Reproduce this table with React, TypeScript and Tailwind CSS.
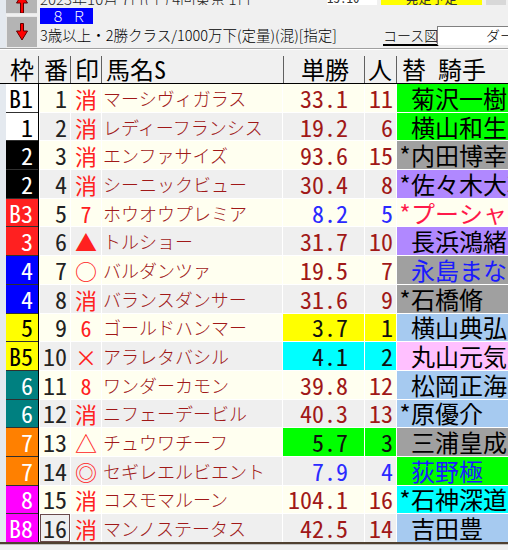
import React from "react";

type Row = {
  f: string;
  fc: string;
  ft: string;
  n: string;
  m: string;
  name: string;
  odds: string;
  pop: string;
  oc: string;
  obg: string;
  jp: string;
  j: string;
  jbg: string;
  jc: string;
};

const GREEN = "bg-[#00ff00]";
const GRAY = "bg-[#a0a0a0]";
const PURPLE = "bg-[#b088ff]";
const LBLUE = "bg-[#a6caf0]";
const PINK = "bg-[#ffc0ff]";
const CYAN = "bg-[#00ffff]";
const NONE = "";
const RED = "text-[#a01818]";
const BLUE = "text-[#2a2aff]";
const BLACK = "text-[#101010]";

const F1 = "bg-white";
const F2 = "bg-black";
const F3 = "bg-[#ff2020]";
const F4 = "bg-[#0000ff]";
const F5 = "bg-[#ffff00]";
const F6 = "bg-[#008080]";
const F7 = "bg-[#ff8000]";
const F8 = "bg-[#ff00ff]";
const TW = "text-white";
const TB = "text-black";

const rows: Row[] = [
  { f: "B1", fc: F1, ft: TB, n: "1", m: "消", name: "マーシヴィガラス", odds: "33.1", pop: "11", oc: RED, obg: NONE, jp: " ", j: "菊沢一樹", jbg: GREEN, jc: "text-black" },
  { f: "1", fc: F1, ft: TB, n: "2", m: "消", name: "レディーフランシス", odds: "19.2", pop: "6", oc: RED, obg: NONE, jp: " ", j: "横山和生", jbg: GREEN, jc: "text-black" },
  { f: "2", fc: F2, ft: TW, n: "3", m: "消", name: "エンファサイズ", odds: "93.6", pop: "15", oc: RED, obg: NONE, jp: "*", j: "内田博幸", jbg: GRAY, jc: "text-black" },
  { f: "2", fc: F2, ft: TW, n: "4", m: "消", name: "シーニックビュー", odds: "30.4", pop: "8", oc: RED, obg: NONE, jp: "*", j: "佐々木大輔", jbg: PURPLE, jc: "text-black" },
  { f: "B3", fc: F3, ft: TW, n: "5", m: "7", name: "ホウオウプレミア", odds: "8.2", pop: "5", oc: BLUE, obg: NONE, jp: "*", j: "プーシャン", jbg: NONE, jc: "text-[#ff1a4a]" },
  { f: "3", fc: F3, ft: TW, n: "6", m: "▲", name: "トルショー", odds: "31.7", pop: "10", oc: RED, obg: NONE, jp: " ", j: "長浜鴻緒", jbg: PURPLE, jc: "text-black" },
  { f: "4", fc: F4, ft: TW, n: "7", m: "○", name: "バルダンツァ", odds: "19.5", pop: "7", oc: RED, obg: NONE, jp: " ", j: "永島まなみ", jbg: GRAY, jc: "text-[#1a1aff]" },
  { f: "4", fc: F4, ft: TW, n: "8", m: "消", name: "バランスダンサー", odds: "31.6", pop: "9", oc: RED, obg: NONE, jp: "*", j: "石橋脩", jbg: GRAY, jc: "text-black" },
  { f: "5", fc: F5, ft: TB, n: "9", m: "6", name: "ゴールドハンマー", odds: "3.7", pop: "1", oc: BLACK, obg: "bg-[#ffff00]", jp: " ", j: "横山典弘", jbg: LBLUE, jc: "text-black" },
  { f: "B5", fc: F5, ft: TB, n: "10", m: "×", name: "アラレタバシル", odds: "4.1", pop: "2", oc: BLACK, obg: "bg-[#00ffff]", jp: " ", j: "丸山元気", jbg: PINK, jc: "text-black" },
  { f: "6", fc: F6, ft: TW, n: "11", m: "8", name: "ワンダーカモン", odds: "39.8", pop: "12", oc: RED, obg: NONE, jp: " ", j: "松岡正海", jbg: LBLUE, jc: "text-black" },
  { f: "6", fc: F6, ft: TW, n: "12", m: "消", name: "ニフェーデービル", odds: "40.3", pop: "13", oc: RED, obg: NONE, jp: "*", j: "原優介", jbg: LBLUE, jc: "text-black" },
  { f: "7", fc: F7, ft: TW, n: "13", m: "△", name: "チュウワチーフ", odds: "5.7", pop: "3", oc: BLACK, obg: "bg-[#00ff00]", jp: " ", j: "三浦皇成", jbg: GRAY, jc: "text-black" },
  { f: "7", fc: F7, ft: TW, n: "14", m: "◎", name: "セギレエルビエント", odds: "7.9", pop: "4", oc: BLUE, obg: NONE, jp: " ", j: "荻野極", jbg: GREEN, jc: "text-[#1a1aff]" },
  { f: "8", fc: F8, ft: TW, n: "15", m: "消", name: "コスモマルーン", odds: "104.1", pop: "16", oc: RED, obg: NONE, jp: "*", j: "石神深道", jbg: CYAN, jc: "text-black" },
  { f: "B8", fc: F8, ft: TW, n: "16", m: "消", name: "マンノステータス", odds: "42.5", pop: "14", oc: RED, obg: NONE, jp: " ", j: "吉田豊", jbg: LBLUE, jc: "text-black" },
];

function UpArrow() {
  return (
    <svg width="14" height="14" viewBox="0 0 14 14">
      <path d="M5.5 13 H8.5 V3 H12.5 L7 -6 L1.5 3 H5.5 Z" fill="#ff0000" stroke="#600000" strokeWidth="1" />
    </svg>
  );
}

function DownArrow() {
  return (
    <svg width="14" height="18" viewBox="0 0 14 18">
      <path d="M5.5 0.5 H8.5 V8 H12.5 L7 17 L1.5 8 H5.5 Z" fill="#ff0000" stroke="#600000" strokeWidth="1" />
    </svg>
  );
}

export default function App() {
  return (
    <div className="w-[508px] h-[550px] overflow-hidden bg-[#f0f0f0] [font-family:'Noto_Sans_Mono_CJK_JP','Noto_Sans_CJK_JP',sans-serif] font-light text-black">
      {/* top panel */}
      <div className="flex h-[48px]">
        <div className="w-[6px] shrink-0 bg-[#e4e9ef]" />
        <div className="w-[31px] shrink-0 flex flex-col gap-[2px]">
          <div className="h-[14px] bg-[#b4b4b4] border-b border-[#e8e8e8] flex justify-center items-start overflow-hidden">
            <UpArrow />
          </div>
          <div className="h-[31px] bg-[#b4b4b4] border-t border-l border-[#e8e8e8] flex justify-center items-center">
            <DownArrow />
          </div>
        </div>
        <div className="flex-1 min-w-0 flex flex-col pl-[3px]">
          <div className="h-[5px] overflow-hidden flex items-end">
            <div className="flex items-end gap-[4px] -mb-[1px] shrink-0">
              <span className="w-[283px] shrink-0 text-[15px] leading-[15px] text-[#222] whitespace-nowrap overflow-hidden [font-family:'Noto_Sans_CJK_JP',sans-serif]">2023年10月 7日(土) 4回東京 1日</span>
              <span className="w-[50px] shrink-0 h-[16px] bg-white text-[13px] leading-[15px] text-[#333]">15:10</span>
              <span className="w-[101px] shrink-0 h-[16px] bg-[#ffff00] text-[13px] leading-[15px] text-center text-[#333]">発走予定</span>
              <span className="w-[20px] shrink-0 h-[16px] bg-[#d8d8d8]" />
            </div>
          </div>
          <div className="h-[3px]" />
          <div className="w-[53px] h-[16px] bg-[#0000ff] text-white text-[14px] leading-[16px] pl-[11px] tracking-[7px] [font-family:'Noto_Sans_CJK_JP',sans-serif]">８Ｒ</div>
          <div className="h-[2px]" />
          <div className="flex items-center h-[18px]">
            <span className="w-[343px] shrink-0 text-[14.5px] leading-[18px] whitespace-nowrap [font-family:'Noto_Sans_CJK_JP',sans-serif]">3歳以上・2勝クラス/1000万下(定量)(混)[指定]</span>
            <span className="w-[50px] shrink-0 text-[14px] leading-[16px] underline underline-offset-[3px] decoration-[2px] whitespace-nowrap [font-family:'Noto_Sans_CJK_JP',sans-serif]">コース図</span>
            <div className="ml-[4px] flex-1 min-w-0 h-[19px] bg-white border-t border-l border-[#808080] text-[14px] leading-[17px] text-right overflow-hidden whitespace-nowrap [font-family:'Noto_Sans_CJK_JP',sans-serif]">
              <span className="-mr-[6px]">ダー</span>
            </div>
          </div>
        </div>
      </div>
      {/* separator */}
      <div className="h-[2px] border-t border-[#a0a0a0] bg-white" />
      {/* header */}
      <div className="flex h-[33px] items-end">
        <div className="w-[6px] shrink-0" />
        <div className="w-[33px] shrink-0 h-[27px] text-[24px] leading-[26px] pl-[4px] border-r border-[#606060]">枠</div>
        <div className="w-[32px] shrink-0 h-[27px] text-[24px] leading-[26px] pl-[5px] border-r border-[#606060]">番</div>
        <div className="w-[31px] shrink-0 h-[27px] text-[24px] leading-[26px] pl-[4px] border-r border-[#606060]">印</div>
        <div className="w-[182px] shrink-0 h-[27px] text-[24px] leading-[26px] pl-[4px] border-r border-[#606060]">馬名S</div>
        <div className="w-[81px] shrink-0 h-[27px] text-[24px] leading-[26px] pl-[17px] border-r border-[#606060]">単勝</div>
        <div className="w-[32px] shrink-0 h-[27px] text-[24px] leading-[26px] pl-[3px] border-r border-[#606060]">人</div>
        <div className="flex-1 min-w-0 h-[27px] text-[24px] leading-[26px] pl-[5px] whitespace-pre">替 騎手</div>
      </div>
      <div className="h-px bg-black" />
      {/* body */}
      <div className="flex h-[458px]">
        <div className="w-[6px] shrink-0 bg-[#e4e9ef]" />
        <div className="w-[32px] shrink-0 flex flex-col gap-px bg-[#303030]">
          {rows.map((r, i) => (
            <div
              key={i}
              className={`flex-1 min-h-0 flex items-center justify-end pr-[5px] text-[24px] leading-none ${r.fc} ${r.ft}`}
            >
              {r.f}
            </div>
          ))}
        </div>
        <div className="w-px shrink-0 bg-black" />
        <div className="flex-1 min-w-0 flex flex-col gap-px bg-white pl-px">
          {rows.map((r, i) => {
            const bg = i % 2 === 0 ? "bg-[#fffff0]" : "bg-[#efefef]";
            return (
              <div key={i} className="flex-1 flex gap-px min-h-0">
                <div
                  className={`w-[30px] shrink-0 flex items-center justify-end pr-[3px] text-[24px] leading-none text-[#222] ${bg} ${
                    i === 15 ? "outline outline-1 -outline-offset-1 outline-[#6a4a4a]" : ""
                  }`}
                >
                  {r.n}
                </div>
                <div className={`w-[30px] shrink-0 flex items-center justify-center text-[22px] leading-none text-[#ff2020] ${bg}`}>
                  {r.m}
                </div>
                <div className={`w-[180px] shrink-0 flex items-center pl-px text-[18px] leading-none whitespace-nowrap overflow-hidden ${RED} ${bg} [font-family:'Noto_Sans_CJK_JP',sans-serif]`}>
                  {r.name}
                </div>
                <div className={`w-[81px] shrink-0 flex items-center justify-end pr-[16px] text-[24px] leading-none ${r.oc} ${r.obg || bg}`}>
                  {r.odds}
                </div>
                <div className={`w-[31px] shrink-0 flex items-center justify-end pr-[3px] text-[24px] leading-none ${r.oc} ${r.obg || bg}`}>
                  {r.pop}
                </div>
                <div className={`flex-1 min-w-0 flex items-center text-[24px] leading-none whitespace-pre overflow-hidden pl-[2px] ${r.jc} ${r.jbg || bg}`}>
                  <span className="w-[12px] shrink-0 inline-block">{r.jp}</span>
                  {r.j}
                </div>
              </div>
            );
          })}
        </div>
      </div>
      <div className="h-[2px] bg-[#504030]" />
      <div className="h-px bg-[#c0c0c0]" />
    </div>
  );
}
